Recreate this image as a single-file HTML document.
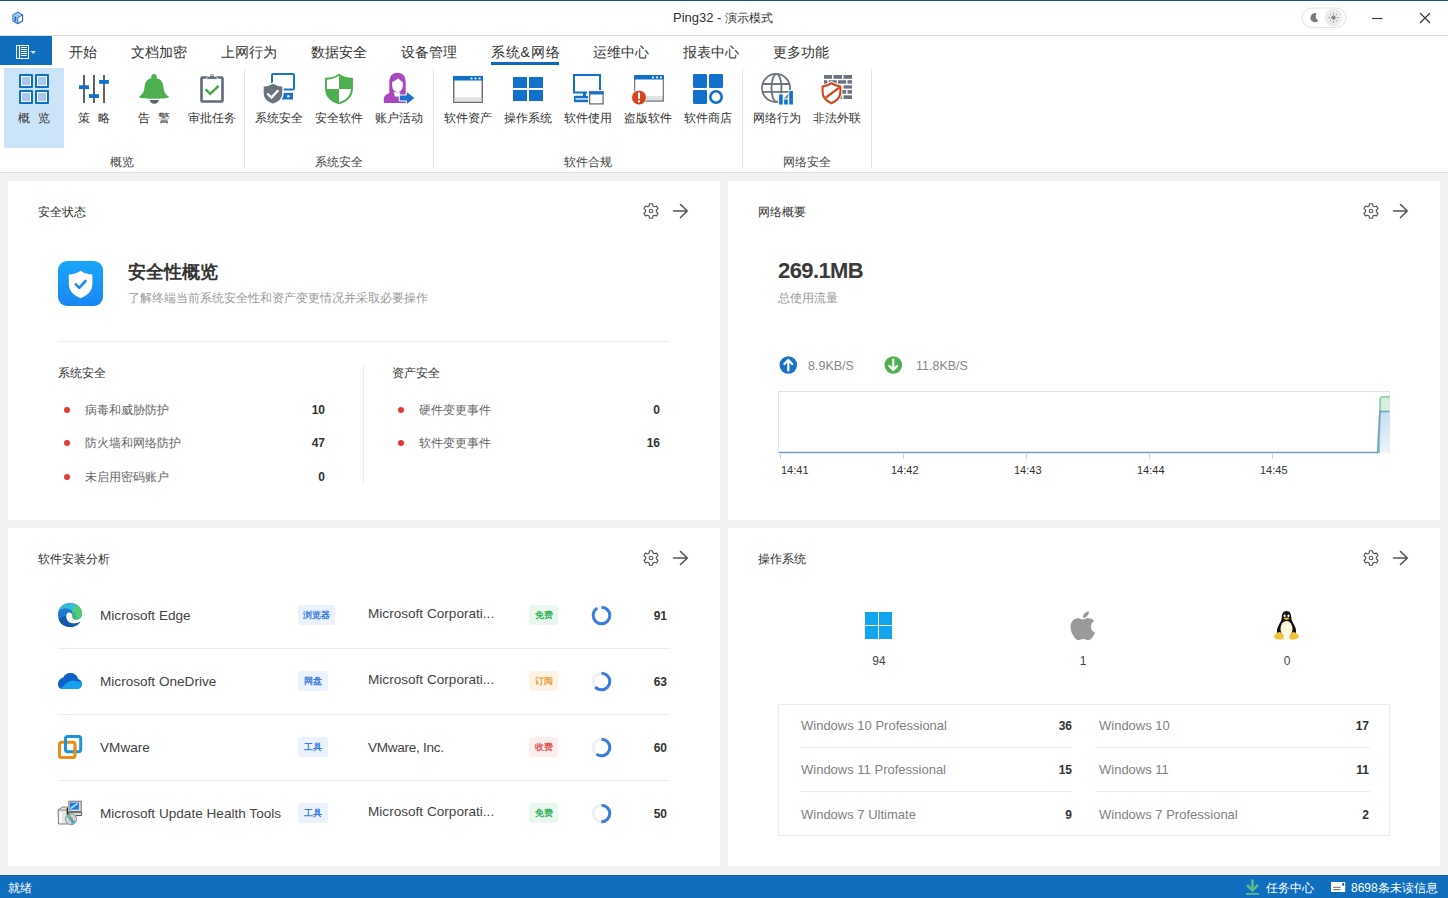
<!DOCTYPE html>
<html><head><meta charset="utf-8">
<style>
*{margin:0;padding:0;box-sizing:border-box}
html,body{width:1448px;height:898px;overflow:hidden;background:#f2f2f2;font-family:"Liberation Sans",sans-serif;color:#333}
.a{position:absolute}
.t{position:absolute;white-space:nowrap;line-height:1}
#title{left:0;top:0;width:1448px;height:36px;background:#fff;border-top:1px solid #175688;border-bottom:1px solid #dcdcdc}
#tabs{left:0;top:36px;width:1448px;height:30px;background:#fff}
#file{left:0;top:36px;width:52px;height:29px;background:#106ebe}
#ribbon{left:0;top:66px;width:1448px;height:107px;background:#fff;border-bottom:1px solid #dedede}
.hl{left:4px;top:68px;width:60px;height:80px;background:#cce4f7}
.sep{position:absolute;top:69px;width:1px;height:99px;background:#e3e3e3}
.panel{position:absolute;background:#fff}
.tab{font-size:14px;color:#333;top:45px}
.rl{font-size:12px;color:#333;top:112px;text-align:center;width:70px}
.gl{font-size:12px;color:#444;top:156px;text-align:center}
.ph{font-size:12px;color:#333}
#status{left:0;top:875px;width:1448px;height:23px;background:#106ebe;border-top:1px solid #175c9c}
.dot{width:6px;height:6px;border-radius:50%;background:#e53935;margin:1px 0 0 1px}
.it{font-size:12px;color:#666}
.num{font-size:12px;font-weight:bold;color:#333}
.ax{font-size:11px;color:#333;top:465px}
.sn{font-size:13.6px;color:#444}
.on{font-size:13px;color:#818181}
.osn{font-size:12px;color:#444;text-align:center}
.bd{height:20px;border-radius:3px;font-size:9px;font-weight:bold;line-height:20px;text-align:center;white-space:nowrap}
.bl{background:#ebf2fd;color:#3b7be0}
.bg{background:#e9f7ee;color:#35b25e}
.bo{background:#fdf3e5;color:#e59c38}
.br{background:#fdeeee;color:#dc5656}
.st{font-size:12px;color:#fff;top:882px}
</style></head><body>
<div id="title" class="a"></div>
<div class="t" style="left:673px;top:11px;font-size:13px;color:#333">Ping32 - <span style="font-size:12px">演示模式</span></div>
<div id="tabs" class="a"></div>
<div id="file" class="a"></div>
<div class="t tab" style="left:69px">开始</div>
<div class="t tab" style="left:131px">文档加密</div>
<div class="t tab" style="left:221px">上网行为</div>
<div class="t tab" style="left:311px">数据安全</div>
<div class="t tab" style="left:401px">设备管理</div>
<div class="t tab" style="left:491px;letter-spacing:0.8px">系统&amp;网络</div>
<div class="a" style="left:491px;top:62px;width:68px;height:3px;background:#1565c0"></div>
<div class="t tab" style="left:593px">运维中心</div>
<div class="t tab" style="left:683px">报表中心</div>
<div class="t tab" style="left:773px">更多功能</div>
<div id="ribbon" class="a"></div>
<div class="a hl"></div>
<div class="sep" style="left:244px"></div>
<div class="sep" style="left:433px"></div>
<div class="sep" style="left:742px"></div>
<div class="sep" style="left:871px"></div>
<div class="t rl" style="left:-1px">概<span style="display:inline-block;width:8px"></span>览</div>
<div class="t rl" style="left:59px">策<span style="display:inline-block;width:8px"></span>略</div>
<div class="t rl" style="left:119px">告<span style="display:inline-block;width:8px"></span>警</div>
<div class="t rl" style="left:177px">审批任务</div>
<div class="t rl" style="left:244px">系统安全</div>
<div class="t rl" style="left:304px">安全软件</div>
<div class="t rl" style="left:364px">账户活动</div>
<div class="t rl" style="left:433px">软件资产</div>
<div class="t rl" style="left:493px">操作系统</div>
<div class="t rl" style="left:553px">软件使用</div>
<div class="t rl" style="left:613px">盗版软件</div>
<div class="t rl" style="left:673px">软件商店</div>
<div class="t rl" style="left:742px">网络行为</div>
<div class="t rl" style="left:802px">非法外联</div>
<div class="t gl" style="left:0;width:244px">概览</div>
<div class="t gl" style="left:244px;width:189px">系统安全</div>
<div class="t gl" style="left:433px;width:309px">软件合规</div>
<div class="t gl" style="left:742px;width:129px">网络安全</div>

<div class="panel" style="left:8px;top:181px;width:712px;height:339px"></div>
<div class="panel" style="left:728px;top:181px;width:712px;height:339px"></div>
<div class="panel" style="left:8px;top:528px;width:712px;height:338px"></div>
<div class="panel" style="left:728px;top:528px;width:712px;height:338px"></div>
<div class="t ph" style="left:38px;top:206px">安全状态</div>
<div class="a" style="left:58px;top:261px;width:45px;height:45px;border-radius:9px;background:linear-gradient(180deg,#18a6f7 0%,#1b86f3 100%)"></div>
<div class="t" style="left:128px;top:263px;font-size:18px;font-weight:bold;color:#333">安全性概览</div>
<div class="t" style="left:128px;top:292px;font-size:12px;color:#999">了解终端当前系统安全性和资产变更情况并采取必要操作</div>
<div class="a" style="left:58px;top:341px;width:612px;height:1px;background:#ececec"></div>
<div class="a" style="left:363px;top:364px;width:1px;height:121px;background:#ececec"></div>
<div class="t ph" style="left:58px;top:367px">系统安全</div>
<div class="t ph" style="left:392px;top:367px">资产安全</div>
<div class="a dot" style="left:63px;top:406px"></div>
<div class="a dot" style="left:63px;top:439px"></div>
<div class="a dot" style="left:63px;top:473px"></div>
<div class="a dot" style="left:397px;top:406px"></div>
<div class="a dot" style="left:397px;top:439px"></div>
<div class="t it" style="left:85px;top:404px">病毒和威胁防护</div>
<div class="t it" style="left:85px;top:437px">防火墙和网络防护</div>
<div class="t it" style="left:85px;top:471px">未启用密码账户</div>
<div class="t it" style="left:419px;top:404px">硬件变更事件</div>
<div class="t it" style="left:419px;top:437px">软件变更事件</div>
<div class="t num" style="right:1123px;top:404px">10</div>
<div class="t num" style="right:1123px;top:437px">47</div>
<div class="t num" style="right:1123px;top:471px">0</div>
<div class="t num" style="right:788px;top:404px">0</div>
<div class="t num" style="right:788px;top:437px">16</div>

<div class="t ph" style="left:758px;top:206px">网络概要</div>
<div class="t" style="left:778px;top:260px;font-size:22px;letter-spacing:-0.6px;font-weight:bold;color:#3a3a3a">269.1MB</div>
<div class="t" style="left:778px;top:292px;font-size:12px;color:#999">总使用流量</div>
<div class="t" style="left:808px;top:360px;font-size:12.5px;color:#888">8.9KB/S</div>
<div class="t" style="left:916px;top:360px;font-size:12.5px;color:#888">11.8KB/S</div>
<div class="a" style="left:778px;top:391px;width:612px;height:63px;border:1px solid #e3e3e3;border-bottom:none"></div>
<div class="t ax" style="left:781px">14:41</div>
<div class="t ax" style="left:891px">14:42</div>
<div class="t ax" style="left:1014px">14:43</div>
<div class="t ax" style="left:1137px">14:44</div>
<div class="t ax" style="left:1260px">14:45</div>

<div class="t ph" style="left:38px;top:553px">软件安装分析</div>
<div class="a" style="left:58px;top:648px;width:612px;height:1px;background:#ececec"></div>
<div class="a" style="left:58px;top:714px;width:612px;height:1px;background:#ececec"></div>
<div class="a" style="left:58px;top:780px;width:612px;height:1px;background:#ececec"></div>
<div class="t sn" style="left:100px;top:609px">Microsoft Edge</div>
<div class="t sn" style="left:100px;top:675px">Microsoft OneDrive</div>
<div class="t sn" style="left:100px;top:741px">VMware</div>
<div class="t sn" style="left:100px;top:807px">Microsoft Update Health Tools</div>
<div class="a bd bl" style="left:298px;top:605px;width:37px">浏览器</div>
<div class="a bd bl" style="left:298px;top:671px;width:29.5px">网盘</div>
<div class="a bd bl" style="left:298px;top:737px;width:29.5px">工具</div>
<div class="a bd bl" style="left:298px;top:803px;width:29.5px">工具</div>
<div class="t sn" style="left:368px;top:607px">Microsoft Corporati...</div>
<div class="t sn" style="left:368px;top:673px">Microsoft Corporati...</div>
<div class="t sn" style="left:368px;top:741px;letter-spacing:-0.3px">VMware, Inc.</div>
<div class="t sn" style="left:368px;top:805px">Microsoft Corporati...</div>
<div class="a bd bg" style="left:529px;top:605px;width:29px">免费</div>
<div class="a bd bo" style="left:529px;top:671px;width:29px">订阅</div>
<div class="a bd br" style="left:529px;top:737px;width:29px">收费</div>
<div class="a bd bg" style="left:529px;top:803px;width:29px">免费</div>
<div class="t num" style="right:781px;top:610px">91</div>
<div class="t num" style="right:781px;top:676px">63</div>
<div class="t num" style="right:781px;top:742px">60</div>
<div class="t num" style="right:781px;top:808px">50</div>

<div class="t ph" style="left:758px;top:553px">操作系统</div>
<div class="t osn" style="left:828px;width:102px;top:655px">94</div>
<div class="t osn" style="left:1032px;width:102px;top:655px">1</div>
<div class="t osn" style="left:1236px;width:102px;top:655px">0</div>
<div class="a" style="left:778px;top:704px;width:612px;height:132px;border:1px solid #ececec"></div>
<div class="a" style="left:800px;top:747px;width:272px;height:1px;background:#ececec"></div>
<div class="a" style="left:800px;top:791px;width:272px;height:1px;background:#ececec"></div>
<div class="a" style="left:1096px;top:747px;width:274px;height:1px;background:#ececec"></div>
<div class="a" style="left:1096px;top:791px;width:274px;height:1px;background:#ececec"></div>
<div class="t on" style="left:801px;top:719px">Windows 10 Professional</div>
<div class="t on" style="left:801px;top:763px">Windows 11 Professional</div>
<div class="t on" style="left:801px;top:808px">Windows 7 Ultimate</div>
<div class="t on" style="left:1099px;top:719px">Windows 10</div>
<div class="t on" style="left:1099px;top:763px">Windows 11</div>
<div class="t on" style="left:1099px;top:808px">Windows 7 Professional</div>
<div class="t num" style="right:376px;top:720px">36</div>
<div class="t num" style="right:376px;top:764px">15</div>
<div class="t num" style="right:376px;top:809px">9</div>
<div class="t num" style="right:79px;top:720px">17</div>
<div class="t num" style="right:79px;top:764px">11</div>
<div class="t num" style="right:79px;top:809px">2</div>

<div id="status" class="a"></div>
<div class="t st" style="left:8px">就绪</div>
<div class="t st" style="left:1266px">任务中心</div>
<div class="t st" style="left:1351px">8698条未读信息</div>
<svg class="a" style="left:0;top:0" width="1448" height="898" viewBox="0 0 1448 898">
<defs>
<clipPath id="globe"><circle cx="776" cy="88" r="14"/></clipPath>
</defs>
<!-- title logo -->
<path d="M17.8,12.3 L22.6,15 L22.6,21 L17.8,23.6 L13,21 L13,15 Z" fill="#fff" stroke="#2f6fc2" stroke-width="1.2" stroke-linejoin="round"/>
<path d="M13.6,15.3 L17.8,17.6 L17.8,23 L13.6,20.7 Z" fill="#86b6ee"/>
<path d="M13.6,15.2 L17.8,12.9 L22,15.2 L17.8,17.5 Z" fill="#9ccbf5"/>
<path d="M15.4,16.6 V21" stroke="#2a5fae" stroke-width="1.3"/>
<path d="M17.8,17.6 L22.4,15.1 M17.8,17.6 V23.4" fill="none" stroke="#2f6fc2" stroke-width="1"/>
<!-- file button icon -->
<g stroke="#fff" fill="none" stroke-width="1">
<rect x="16.5" y="45.5" width="12" height="13"/>
<path d="M19.5,46 L19.5,58" stroke-width="1.2"/>
<path d="M21,47.5 H27 M21,49.5 H27 M21,51.5 H27 M21,53.5 H27 M21,55.5 H27"/>
</g>
<path d="M30.2,51 L36,51 L33.1,54 Z" fill="#bfe6fb"/>
<!-- overview squares -->
<g>
<rect x="19" y="74" width="14" height="14" rx="1" fill="#1070cc"/><rect x="21" y="76" width="10" height="10" fill="#fff"/><rect x="22" y="77" width="8" height="8" fill="#a9c9f0"/>
<rect x="35" y="74" width="14" height="14" rx="1" fill="#1070cc"/><rect x="37" y="76" width="10" height="10" fill="#fff"/><rect x="38" y="77" width="8" height="8" fill="#a9c9f0"/>
<rect x="19" y="90" width="14" height="14" rx="1" fill="#1070cc"/><rect x="21" y="92" width="10" height="10" fill="#fff"/><rect x="22" y="93" width="8" height="8" fill="#a9c9f0"/>
<rect x="35" y="90" width="14" height="14" rx="1" fill="#1070cc"/><rect x="37" y="92" width="10" height="10" fill="#fff"/><rect x="38" y="93" width="8" height="8" fill="#a9c9f0"/>
</g>
<!-- strategy -->
<g fill="#5b6270"><rect x="83" y="75" width="2" height="28"/><rect x="93" y="75" width="2" height="28"/><rect x="103" y="75" width="2" height="28"/></g>
<g fill="#1070cc"><rect x="79" y="85.3" width="10" height="3.8"/><rect x="89" y="94.2" width="10" height="3.8"/><rect x="99" y="80" width="10" height="3.8"/></g>
<!-- bell -->
<path d="M151.2,78.2 C150.8,76.3 152,74.1 154,74.1 C156,74.1 157.2,76.3 156.8,78.2 C160.8,79 163,82 163.4,86.5 C163.8,91.5 165,93.8 169,96.8 C168.3,98.2 165.5,98.7 154,98.7 C142.5,98.7 139.7,98.2 139,96.8 C143,93.8 144.2,91.5 144.6,86.5 C145,82 147.2,79 151.2,78.2 Z" fill="#4caf50"/>
<path d="M149.7,100.1 H158.8 C158.6,102.5 156.6,103.8 154.25,103.8 C151.9,103.8 149.9,102.5 149.7,100.1 Z" fill="#5b6270"/>
<!-- clipboard -->
<rect x="201.5" y="77.5" width="21" height="24" rx="1.2" fill="#fff" stroke="#5f6a78" stroke-width="2.6"/>
<path d="M205.5,79.4 L208.5,76.3 L210,76.3 L210,73.9 L214,73.9 L214,76.3 L215.5,76.3 L218.5,79.4 Z" fill="#5f6a78" stroke="#fff" stroke-width="0.9" stroke-linejoin="round"/>
<rect x="211.3" y="74.8" width="1.4" height="1.2" fill="#fff"/>
<path d="M205.6,89.4 L210.2,93.8 L218.6,85.8" fill="none" stroke="#43a84a" stroke-width="2.4"/>
<!-- system security -->
<rect x="272" y="74" width="22" height="15.5" rx="1" fill="#fff" stroke="#1a72cc" stroke-width="2"/>
<rect x="281.5" y="92.8" width="11.5" height="6.7" fill="#1a72cc"/>
<circle cx="288.3" cy="96.2" r="1.2" fill="#fff"/>
<path d="M273,83 C270,85 266.5,86 263,86 L263,93.5 C263,99 267.5,102.5 273,104.5 C278.5,102.5 283,99 283,93.5 L283,86 C279.5,86 276,85 273,83 Z" fill="#6b7380" stroke="#fff" stroke-width="1.4"/>
<path d="M267.3,93.5 L271.5,97.5 L278.3,90.3" fill="none" stroke="#fff" stroke-width="2.4"/>
<!-- safe software shield -->
<path d="M339,74.8 C335,77.5 330.5,78.8 326,78.8 L326,88.5 C326,96 331,100.8 339,103.4 C347,100.8 352,96 352,88.5 L352,78.8 C347.5,78.8 343,77.5 339,74.8 Z" fill="#fff" stroke="#4caf50" stroke-width="1.9"/>
<path d="M339,74.8 C343,77.5 347.5,78.8 352,78.8 L352,89 L339,89 Z" fill="#4caf50"/>
<path d="M326,89 L339,89 L339,103.4 C331,100.8 326,96 326,89 Z" fill="#4caf50"/>
<!-- account activity -->
<path d="M397.5,72.8 C391.5,72.8 389.3,77 389.3,83 L389.3,95 L405.7,95 L405.7,83 C405.7,77 403.5,72.8 397.5,72.8 Z" fill="#ab47bc"/>
<path d="M392.2,82 C394,81.5 397,79.5 398.5,78.3 C399.5,80 401.5,81.5 402.8,82 L402.8,85.5 C402.8,89.5 400.5,92 397.5,92 C394.5,92 392.2,89.5 392.2,85.5 Z" fill="#fff"/>
<path d="M383.8,103 L383.8,99 C383.8,95.5 387.5,93.3 392,92.3 L402,92.3 C406.5,93.3 406.5,95.5 406.5,99 L406.5,103 Z" fill="#ab47bc"/>
<path d="M393.5,92.3 L400.5,92.3 L399,96.5 L395,96.5 Z" fill="#fff"/>
<path d="M399.3,95 L406.5,95 L406.5,91.3 L415,98 L406.5,104.7 L406.5,101 L399.3,101 Z" fill="#1a72cc" stroke="#fff" stroke-width="1"/>
<!-- software assets window -->
<rect x="453.7" y="76.5" width="28.6" height="25.8" fill="#fff" stroke="#6b7078" stroke-width="1.15"/>
<rect x="453" y="97.3" width="30" height="5.5" fill="#e2e2e2"/>
<rect x="453.7" y="97.3" width="28.6" height="5" fill="none" stroke="#5f6670" stroke-width="0"/>
<path d="M453.7,76 L453.7,102.3 L482.3,102.3 L482.3,76" fill="none" stroke="#6b7078" stroke-width="1.15"/>
<rect x="453" y="76" width="30" height="4.6" rx="1" fill="#1070cc"/>
<rect x="470.6" y="77.5" width="1.8" height="1.8" fill="#fff"/><rect x="474.6" y="77.5" width="1.8" height="1.8" fill="#fff"/><rect x="478.6" y="77.5" width="1.8" height="1.8" fill="#fff"/>
<!-- OS windows -->
<g fill="#1070cc"><rect x="513" y="77" width="14" height="11"/><rect x="529" y="77" width="14" height="11"/><rect x="513" y="90" width="14" height="11"/><rect x="529" y="90" width="14" height="11"/></g>
<!-- software use -->
<path d="M587,92.4 L574,92.4 L574,75 L600,75 L600,90" fill="none" stroke="#1070cc" stroke-width="2"/>
<rect x="574" y="95.8" width="14" height="6.4" fill="#1070cc"/>
<rect x="575.5" y="98.3" width="12.5" height="1.3" fill="#fff"/>
<rect x="583" y="92" width="3" height="4" fill="#1070cc"/>
<rect x="589.6" y="91.9" width="13.5" height="12" fill="#fff" stroke="#5f6670" stroke-width="1.2"/>
<rect x="589" y="91.3" width="14.7" height="3.2" fill="#1a72cc"/>
<!-- piracy -->
<path d="M634.7,75.5 L634.7,101 L663.3,101 L663.3,75.5" fill="#fff" stroke="#6b7078" stroke-width="1.15"/>
<rect x="634" y="96" width="30" height="5.3" fill="#e2e2e2"/>
<path d="M634.7,96 L634.7,101 L663.3,101 L663.3,96" fill="none" stroke="#6b7078" stroke-width="1.15"/>
<rect x="634" y="75" width="30" height="4.6" rx="1" fill="#1070cc"/>
<rect x="652" y="76.5" width="1.8" height="1.8" fill="#fff"/><rect x="656" y="76.5" width="1.8" height="1.8" fill="#fff"/><rect x="660" y="76.5" width="1.8" height="1.8" fill="#fff"/>
<circle cx="639" cy="97.6" r="7.4" fill="#d4451f" stroke="#fff" stroke-width="0.8"/>
<rect x="638" y="92.5" width="2" height="6.5" fill="#fff"/><rect x="638" y="100.3" width="2" height="2" fill="#fff"/>
<!-- store -->
<g fill="#1070cc"><rect x="693" y="74" width="14" height="14" rx="1.2"/><rect x="709" y="74" width="14" height="14" rx="1.2"/><rect x="693" y="90" width="14" height="14" rx="1.2"/></g>
<circle cx="716" cy="97" r="5.7" fill="none" stroke="#1070cc" stroke-width="2.6"/>
<!-- globe -->
<circle cx="776" cy="88" r="14.1" fill="none" stroke="#6b7380" stroke-width="1.8"/>
<g clip-path="url(#globe)" stroke="#6b7380" stroke-width="1.8" fill="none">
<ellipse cx="776.5" cy="88" rx="5" ry="14.1"/>
<path d="M760,84 H792 M760,91.8 H792"/>
</g>
<g fill="#1070cc" stroke="#fff" stroke-width="1"><rect x="778.6" y="94" width="4.6" height="11"/><rect x="783.7" y="99" width="4.6" height="6"/><rect x="788.8" y="90.5" width="4.6" height="14.5"/></g>
<!-- firewall -->
<g fill="#6b7380">
<rect x="824" y="75" width="8" height="3.8"/><rect x="833.5" y="75" width="8.5" height="3.8"/><rect x="843.5" y="75" width="8.5" height="3.8"/>
<rect x="824" y="80.2" width="3.3" height="3.5"/><rect x="828.7" y="80.2" width="8" height="3.5"/><rect x="838" y="80.2" width="8.2" height="3.5"/><rect x="847.5" y="80.2" width="4.5" height="3.5"/>
<rect x="824" y="85.3" width="8" height="3.3"/><rect x="833.5" y="85.3" width="8.5" height="3.3"/><rect x="843.5" y="85.3" width="8.5" height="3.3"/>
<rect x="824" y="90.1" width="3.3" height="3.6"/><rect x="828.7" y="90.1" width="8" height="3.6"/><rect x="838" y="90.1" width="8.2" height="3.6"/><rect x="847.5" y="90.1" width="4.5" height="3.6"/>
<rect x="824" y="95.3" width="8" height="3.7"/><rect x="833.5" y="95.3" width="8.5" height="3.7"/><rect x="843.5" y="95.3" width="8.5" height="3.7"/>
</g>
<path d="M831.5,83.2 C829,85 825.5,86.3 822.6,86.6 L822.6,92 C822.6,97.5 826.5,101 831.5,103.3 C836.5,101 840.4,97.5 840.4,92 L840.4,86.6 C837.5,86.3 834,85 831.5,83.2 Z" fill="#fff" stroke="#fff" stroke-width="4"/>
<path d="M831.5,83.2 C829,85 825.5,86.3 822.6,86.6 L822.6,92 C822.6,97.5 826.5,101 831.5,103.3 C836.5,101 840.4,97.5 840.4,92 L840.4,86.6 C837.5,86.3 834,85 831.5,83.2 Z" fill="#fff" stroke="#d4451a" stroke-width="2.1"/>
<path d="M825.8,97.6 L839.2,87.6" stroke="#d4451a" stroke-width="2.4"/>
<path d="M648.98,205.99 L649.59,203.74 L652.41,203.74 L653.02,205.99 L654.32,206.74 L656.58,206.15 L658.00,208.59 L656.35,210.25 L656.35,211.75 L658.00,213.41 L656.58,215.85 L654.32,215.26 L653.02,216.01 L652.41,218.26 L649.59,218.26 L648.98,216.01 L647.68,215.26 L645.42,215.85 L644.00,213.41 L645.65,211.75 L645.65,210.25 L644.00,208.59 L645.42,206.15 L647.68,206.74Z" fill="none" stroke="#555" stroke-width="1.15" stroke-linejoin="round"/><circle cx="651" cy="211" r="1.8" fill="none" stroke="#555" stroke-width="1.1"/>
<path d="M1368.98,205.99 L1369.59,203.74 L1372.41,203.74 L1373.02,205.99 L1374.32,206.74 L1376.58,206.15 L1378.00,208.59 L1376.35,210.25 L1376.35,211.75 L1378.00,213.41 L1376.58,215.85 L1374.32,215.26 L1373.02,216.01 L1372.41,218.26 L1369.59,218.26 L1368.98,216.01 L1367.68,215.26 L1365.42,215.85 L1364.00,213.41 L1365.65,211.75 L1365.65,210.25 L1364.00,208.59 L1365.42,206.15 L1367.68,206.74Z" fill="none" stroke="#555" stroke-width="1.15" stroke-linejoin="round"/><circle cx="1371" cy="211" r="1.8" fill="none" stroke="#555" stroke-width="1.1"/>
<path d="M648.98,552.99 L649.59,550.74 L652.41,550.74 L653.02,552.99 L654.32,553.74 L656.58,553.15 L658.00,555.59 L656.35,557.25 L656.35,558.75 L658.00,560.41 L656.58,562.85 L654.32,562.26 L653.02,563.01 L652.41,565.26 L649.59,565.26 L648.98,563.01 L647.68,562.26 L645.42,562.85 L644.00,560.41 L645.65,558.75 L645.65,557.25 L644.00,555.59 L645.42,553.15 L647.68,553.74Z" fill="none" stroke="#555" stroke-width="1.15" stroke-linejoin="round"/><circle cx="651" cy="558" r="1.8" fill="none" stroke="#555" stroke-width="1.1"/>
<path d="M1368.98,552.99 L1369.59,550.74 L1372.41,550.74 L1373.02,552.99 L1374.32,553.74 L1376.58,553.15 L1378.00,555.59 L1376.35,557.25 L1376.35,558.75 L1378.00,560.41 L1376.58,562.85 L1374.32,562.26 L1373.02,563.01 L1372.41,565.26 L1369.59,565.26 L1368.98,563.01 L1367.68,562.26 L1365.42,562.85 L1364.00,560.41 L1365.65,558.75 L1365.65,557.25 L1364.00,555.59 L1365.42,553.15 L1367.68,553.74Z" fill="none" stroke="#555" stroke-width="1.15" stroke-linejoin="round"/><circle cx="1371" cy="558" r="1.8" fill="none" stroke="#555" stroke-width="1.1"/>
<path d="M673.5,211 H687.3 M680.5,204.5 L687.3,211 L680.5,217.5" fill="none" stroke="#555" stroke-width="1.6" stroke-linecap="round" stroke-linejoin="round"/>
<path d="M1393.5,211 H1407.3 M1400.5,204.5 L1407.3,211 L1400.5,217.5" fill="none" stroke="#555" stroke-width="1.6" stroke-linecap="round" stroke-linejoin="round"/>
<path d="M673.5,558 H687.3 M680.5,551.5 L687.3,558 L680.5,564.5" fill="none" stroke="#555" stroke-width="1.6" stroke-linecap="round" stroke-linejoin="round"/>
<path d="M1393.5,558 H1407.3 M1400.5,551.5 L1407.3,558 L1400.5,564.5" fill="none" stroke="#555" stroke-width="1.6" stroke-linecap="round" stroke-linejoin="round"/>
<!-- shield tile -->
<path d="M80.6,270.8 C77,273.3 72.8,274.5 68.8,274.5 L68.8,284 C68.8,290.8 73.5,295.5 80.6,298.2 C87.7,295.5 92.4,290.8 92.4,284 L92.4,274.5 C88.4,274.5 84.2,273.3 80.6,270.8 Z" fill="#fff"/>
<path d="M75.8,284.3 L79.3,287.8 L85.5,281" fill="none" stroke="#1d8cf4" stroke-width="2.6" stroke-linecap="round" stroke-linejoin="round"/>
<!-- up/down -->
<circle cx="788.3" cy="365" r="8.8" fill="#1a73c9"/>
<path d="M788.3,370.5 V360.3 M784.4,364 L788.3,360 L792.2,364" fill="none" stroke="#fff" stroke-width="2.2" stroke-linecap="round" stroke-linejoin="round"/>
<circle cx="893.3" cy="365" r="8.8" fill="#4caf50"/>
<path d="M893.3,359.5 V369.7 M889.4,366 L893.3,370 L897.2,366" fill="none" stroke="#fff" stroke-width="2.2" stroke-linecap="round" stroke-linejoin="round"/>
<!-- chart -->
<defs>
<linearGradient id="gb" x1="0" y1="0" x2="0" y2="1"><stop offset="0" stop-color="#c6dcf2"/><stop offset="1" stop-color="#eef4fb"/></linearGradient>
</defs>
<path d="M1378.5,453 L1380,397 L1383,396.5 L1389.5,396.5 L1389.5,453 Z" fill="#d6eedd"/>
<path d="M1377.5,453 L1379.8,411 L1389.5,411 L1389.5,453 Z" fill="url(#gb)"/>
<path d="M1379,453 L1380.3,398.5 Q1381,396.8 1383,396.8 L1389.5,396.8" fill="none" stroke="#8fd3a5" stroke-width="1.8"/>
<path d="M779,452.5 L1377.6,452.5 L1379.9,411.5 L1389.5,411.5" fill="none" stroke="#6fa0c8" stroke-width="1.6"/>
<g stroke="#d0d0d0" stroke-width="1"><path d="M780.5,454 V459 M903.5,454 V459 M1026.5,454 V459 M1149.5,454 V459 M1272.5,454 V459"/></g>

<circle cx="601.5" cy="615.5" r="8.3" fill="none" stroke="#f0f0f0" stroke-width="3"/><circle cx="601.5" cy="615.5" r="8.3" fill="none" stroke="#3b7ddd" stroke-width="3" stroke-dasharray="47.46 52.15" transform="rotate(-90 601.5 615.5)"/>
<circle cx="601.5" cy="681.5" r="8.3" fill="none" stroke="#f0f0f0" stroke-width="3"/><circle cx="601.5" cy="681.5" r="8.3" fill="none" stroke="#3b7ddd" stroke-width="3" stroke-dasharray="32.85 52.15" transform="rotate(-90 601.5 681.5)"/>
<circle cx="601.5" cy="747.5" r="8.3" fill="none" stroke="#f0f0f0" stroke-width="3"/><circle cx="601.5" cy="747.5" r="8.3" fill="none" stroke="#3b7ddd" stroke-width="3" stroke-dasharray="31.29 52.15" transform="rotate(-90 601.5 747.5)"/>
<circle cx="601.5" cy="813.5" r="8.3" fill="none" stroke="#f0f0f0" stroke-width="3"/><circle cx="601.5" cy="813.5" r="8.3" fill="none" stroke="#3b7ddd" stroke-width="3" stroke-dasharray="26.08 52.15" transform="rotate(-90 601.5 813.5)"/>
<!-- edge -->
<defs><clipPath id="edgec"><path d="M80.5,621.5 C78,625.5 74,627 70,627 C63,627 58,622 58,615 C58,608 63,603 70,603 C77,603 82,608 82,613.5 C82,617.5 79.5,619.5 76,619.5 C73.5,619.5 72.5,618 72.5,616.5 C72.5,613.5 70.8,612.5 69.3,612.5 C67,612.5 66.2,614.5 66.2,616.5 C66.2,620.5 69.3,623.3 73.5,623.5 C76.5,623.6 79,622.8 80.5,621.5 Z"/></clipPath></defs>
<g clip-path="url(#edgec)">
<rect x="56" y="601" width="28" height="28" fill="#1b78d3"/>
<path d="M56,612 C61,608 67,607.5 71,610 C73,611.5 74,613 74.5,615 L77,601 L56,601 Z" fill="#35bdd7"/>
<path d="M75.5,601 L84,601 L84,621 L72,621 C72.5,617 73,613.5 71.8,611.8 C74.5,609 76,605 75.5,601 Z" fill="#50cf7b"/>
<path d="M72,619.5 C72.3,616 72.6,614 71.5,612.8 L74.5,611.5 L76.5,619.8 Z" fill="#3cb77f"/>
<path d="M56,622 C60,626 65.5,628 71,628 L84,628 L84,619 C80,622.5 76,623.8 72.5,623.3 C68.5,622.5 66,619.5 66,615.5 C63,616.5 59.5,618.5 56,622 Z" fill="#1558ab"/>
</g>
<!-- onedrive -->
<path d="M61.5,688.7 C59.5,688.7 58,687 58,684.5 C58,681 60,678.3 63,677.8 C64.3,674.8 67,673 70.5,673 C74.5,673 77.3,675.5 78,679 C80.5,679.5 82,681.5 82,684 C82,686.7 80.3,688.7 78,688.7 Z" fill="#0d63c3"/>
<path d="M61,688.7 L78,688.7 C80.3,688.7 82,686.7 82,684 L81.5,682.5 C78.5,681.3 75.5,680.8 72.5,680.8 C68,681 64.5,685 61,688.7 Z" fill="#14a2ef"/>
<!-- vmware -->
<rect x="59.5" y="742.3" width="15.5" height="15.3" rx="2.2" fill="none" stroke="#e78f1b" stroke-width="3"/>
<rect x="65.5" y="736.5" width="15.2" height="15.2" rx="2.2" fill="none" stroke="#1f93d5" stroke-width="3"/>
<path d="M75,747.5 V754" fill="none" stroke="#e78f1b" stroke-width="3"/>
<!-- health tools -->
<path d="M58,810 L62.5,807 L67.5,807 L67.5,824 L58.5,824 Z" fill="#e4e4e4" stroke="#6f6f6f" stroke-width="0.9"/>
<path d="M58,810 L67.5,810" stroke="#888" stroke-width="1"/>
<rect x="59.5" y="812" width="2.5" height="11" fill="#fafafa"/>
<path d="M67.3,808 V815" stroke="#222" stroke-width="1.2"/>
<rect x="68.9" y="801.2" width="12.3" height="10.3" fill="#dcdcdc" stroke="#6a6a6a" stroke-width="0.9"/>
<rect x="69.9" y="802.6" width="9" height="7" fill="#1f7fd8"/>
<path d="M70.5,808.5 L77.5,803.5" stroke="#9fdcff" stroke-width="1.6"/>
<path d="M68.5,812.3 H81.6 V815.5 H76 V816.5 H68.5 Z" fill="#d8d8d8" stroke="#333" stroke-width="0.8"/>
<circle cx="71" cy="819.2" r="5.6" fill="#cfd2d6" stroke="#777" stroke-width="0.7"/>
<path d="M66.5,817 A5,5 0 0 1 70.5,814.2 L71,819.2 Z" fill="#55c488"/>
<path d="M75.5,821.3 A5,5 0 0 1 71.5,824.2 L71,819.2 Z" fill="#3fa9d8"/>
<circle cx="71" cy="819.2" r="1.2" fill="#fff" stroke="#222" stroke-width="0.7"/>
<!-- windows -->
<g fill="#10a5ec"><rect x="865" y="612" width="13" height="13"/><rect x="879" y="612" width="13" height="13"/><rect x="865" y="626" width="13" height="13"/><rect x="879" y="626" width="13" height="13"/></g>
<!-- apple -->
<path transform="translate(1070.3,609.1) scale(0.0648)" fill="#9a9a9a" d="M318.7 268.7c-.2-36.7 16.4-64.4 50-84.8-18.8-26.9-47.2-41.7-84.7-44.6-35.5-2.8-74.3 20.7-88.5 20.7-15 0-49.4-19.7-76.4-19.7C63.3 141.2 4 184.8 4 273.5q0 39.3 14.4 81.2c12.8 36.7 59 126.7 107.2 125.2 25.2-.6 43-17.9 75.8-17.9 31.8 0 48.3 17.9 76.4 17.9 48.6-.7 90.4-82.5 102.6-119.3-65.2-30.7-61.7-90-61.7-91.9zm-56.6-164.2c27.3-32.4 24.8-61.9 24-72.5-24.1 1.4-52 16.4-67.9 34.9-17.5 19.8-27.8 44.3-25.6 71.9 26.1 2 49.9-11.4 69.5-34.3z"/>
<!-- tux -->
<path d="M1286.5,611 C1283,611 1281.8,614 1281.8,617 C1281.8,620 1280.5,622 1278.5,625.5 C1276.5,629 1276.5,633 1278,636 L1295,636 C1296.5,633 1296.5,629 1294.5,625.5 C1292.5,622 1291.2,620 1291.2,617 C1291.2,614 1290,611 1286.5,611 Z" fill="#111"/>
<ellipse cx="1286.5" cy="629" rx="6" ry="8" fill="#fdf8dc"/>
<ellipse cx="1284.6" cy="615.8" rx="1.1" ry="1.4" fill="#fff"/><ellipse cx="1288.4" cy="615.8" rx="1.1" ry="1.4" fill="#fff"/>
<path d="M1283.5,618.3 Q1286.5,616.8 1289.5,618.3 Q1286.5,621.5 1283.5,618.3 Z" fill="#f0c020"/>
<path d="M1274,637 C1274,634.5 1277,632.5 1279.5,632 C1281.5,632 1283.5,636 1284,638.5 C1282,640.5 1276,640 1274,637 Z" fill="#f0c43a"/>
<path d="M1299,637 C1299,634.5 1296,632.5 1293.5,632 C1291.5,632 1289.5,636 1289,638.5 C1291,640.5 1297,640 1299,637 Z" fill="#f0c43a"/>
<!-- status icons -->
<g fill="none" stroke="#5db88c" stroke-width="2.6">
<path d="M1252.5,879.5 V890"/><path d="M1247,885 L1252.5,890.5 L1258,885"/>
</g>
<rect x="1246" y="893" width="13" height="1.8" fill="#5db88c"/>
<rect x="1331" y="882" width="14.2" height="10" fill="#fff"/>
<path d="M1333.3,887.3 H1340.5 M1333.3,889.6 H1340.5" stroke="#555" stroke-width="0.9"/>
<rect x="1342.3" y="883" width="1.8" height="2.8" fill="#1a5fa8"/>
<!-- theme pill -->
<rect x="1302" y="8" width="44" height="19.5" rx="9.75" fill="#fff" stroke="#e3e3e3" stroke-width="1"/>
<circle cx="1333.5" cy="17.6" r="9" fill="#ececec"/>
<path d="M1316.5,13.2 A4.6,4.6 0 1 0 1318.6,20.6 A5,5 0 0 1 1316.5,13.2 Z" fill="#7a7a7a"/>
<g stroke="#8a8a8a" stroke-width="0.9"><circle cx="1333.5" cy="17.6" r="1.8" fill="#8a8a8a"/>
<path d="M1333.5,12.5 V14.3 M1333.5,20.9 V22.7 M1328.4,17.6 H1330.2 M1336.8,17.6 H1338.6 M1329.9,14 L1331.1,15.2 M1335.9,20 L1337.1,21.2 M1329.9,21.2 L1331.1,20 M1335.9,15.2 L1337.1,14"/></g>
<!-- window controls -->
<path d="M1372,18.5 H1382.5" stroke="#333" stroke-width="1.1"/>
<path d="M1420,13 L1430,23 M1430,13 L1420,23" stroke="#333" stroke-width="1.1"/>

<!--MORE-->
</svg>

</body></html>
